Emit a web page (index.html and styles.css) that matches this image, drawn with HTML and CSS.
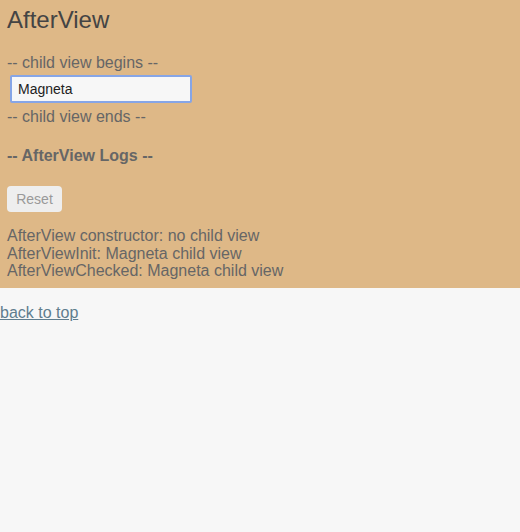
FILE: index.html
```html
<!DOCTYPE html>
<html>
<head>
<meta charset="utf-8">
<link rel="stylesheet" href="styles.css">
</head>
<body>
<div class="parent">
  <h2 class="title">AfterView</h2>
  <div class="line first">-- child view begins --</div>
  <div class="child"><input class="hero" type="text" value="Magneta"></div>
  <div class="line">-- child view ends --</div>
  <h4 class="logs-title">-- AfterView Logs --</h4>
  <button class="reset">Reset</button>
  <div class="logs">
    <div>AfterView constructor: no child view</div>
    <div>AfterViewInit: Magneta child view</div>
    <div>AfterViewChecked: Magneta child view</div>
  </div>
</div>
<a class="top-link" href="#">back to top</a>
</body>
</html>
```
FILE: styles.css
```css
html, body {
  margin: 0;
  padding: 0;
}
body {
  background: #f7f7f7;
  font-family: "Liberation Sans", Arial, sans-serif;
  font-size: 16px;
  color: #666;
}
.parent {
  background: #deb887;
  padding: 6px 7px 8px;
}
.title {
  margin: 0;
  font-size: 24px;
  line-height: 28px;
  font-weight: normal;
  color: #444;
}
.line {
  line-height: 18px;
}
.line.first {
  margin-top: 20px;
}
.child {
  padding: 3px 0 5px 3px;
}
.hero {
  display: block;
  box-sizing: border-box;
  width: 182px;
  height: 28px;
  margin: 0;
  padding: 0 6px;
  border: 2px solid #86a5e6;
  border-radius: 2px;
  background: #f7f7f7;
  font-family: "Liberation Sans", Arial, sans-serif;
  font-size: 14px;
  color: #222;
  outline: none;
}
.logs-title {
  margin: 21px 0 0;
  font-size: 16px;
  line-height: 18px;
  font-weight: bold;
  color: #666;
}
.reset {
  display: block;
  margin-top: 21px;
  width: 55px;
  height: 26px;
  padding: 0;
  border: none;
  border-radius: 4px;
  background: #eeeeee;
  font-family: "Liberation Sans", Arial, sans-serif;
  font-size: 14px;
  color: #999;
}
.logs {
  margin-top: 15px;
  line-height: 17.5px;
}
.top-link {
  display: block;
  margin-top: 16px;
  line-height: 18px;
  color: #5f7d8e;
}
```
